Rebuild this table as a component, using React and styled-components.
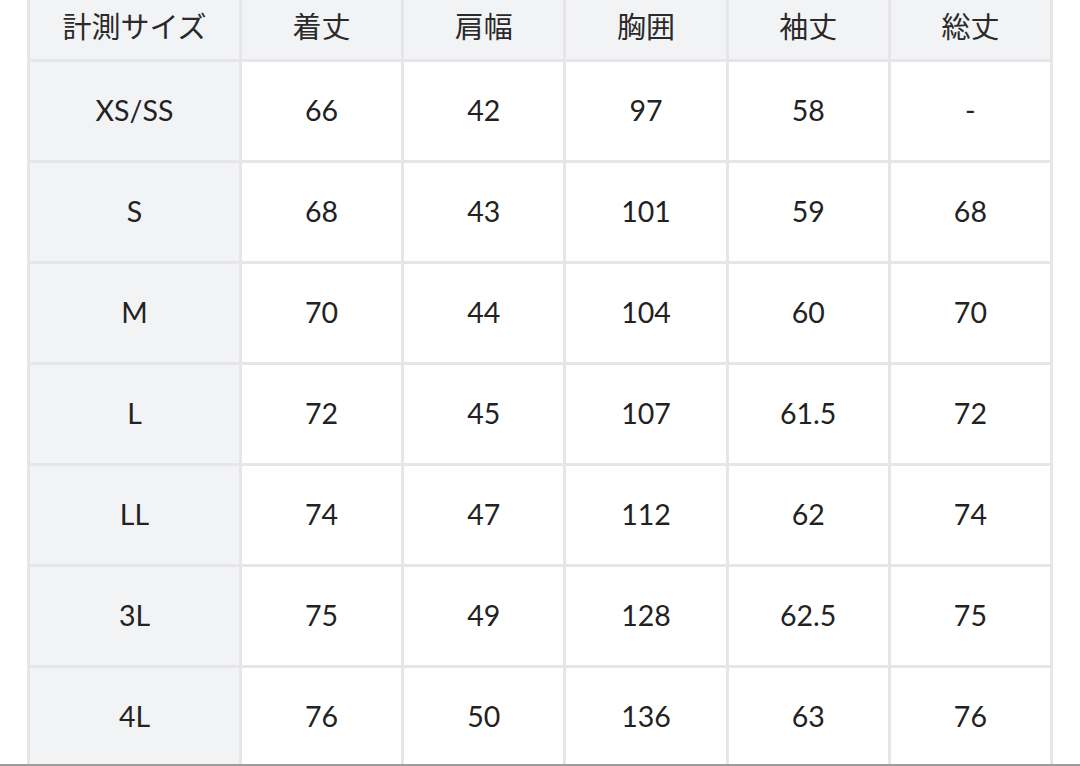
import React from 'react'
import styled, { createGlobalStyle } from 'styled-components'

const GlobalStyle = createGlobalStyle`
  html, body {
    margin: 0;
    padding: 0;
    background: #fff;
  }
  body {
    font-family: Lato, "Noto Sans CJK JP", sans-serif;
    color: #222;
  }
`

const headers = ['計測サイズ', '着丈', '肩幅', '胸囲', '袖丈', '総丈']

const rows = [
  ['XS/SS', '66', '42', '97', '58', '-'],
  ['S', '68', '43', '101', '59', '68'],
  ['M', '70', '44', '104', '60', '70'],
  ['L', '72', '45', '107', '61.5', '72'],
  ['LL', '74', '47', '112', '62', '74'],
  ['3L', '75', '49', '128', '62.5', '75'],
  ['4L', '76', '50', '136', '63', '76'],
]

const Page = () => {
  return (
    <Wrapper>
      <GlobalStyle />
      <Table>
        {headers.map((h) => (
          <HeadCell key={h}>{h}</HeadCell>
        ))}
        {rows.map((row) =>
          row.map((val, i) => (
            <Cell key={row[0] + i} $label={i === 0}>
              {val}
            </Cell>
          ))
        )}
      </Table>
    </Wrapper>
  )
}

const Wrapper = styled.main`
  height: 766px;
  box-sizing: border-box;
  overflow: hidden;
  padding-left: 27px;
  border-bottom: 2px solid #9c9c9c;
`

const Table = styled.div`
  width: 1026px;
  display: grid;
  grid-template-columns: 209px repeat(5, 1fr);
  grid-template-rows: 59px;
  grid-auto-rows: 98px;
  gap: 3px;
  padding: 0 3px 3px;
  box-sizing: border-box;
  background: #e6e6e8;
`

const HeadCell = styled.div`
  box-sizing: border-box;
  padding-bottom: 9px;
  display: flex;
  align-items: center;
  justify-content: center;
  background: #f2f3f5;
  font-size: 29px;
  font-weight: 400;
  color: #2a2a2a;
  font-family: "Noto Sans CJK JP", sans-serif;
`

const Cell = styled.div`
  box-sizing: border-box;
  padding-bottom: 3px;
  display: flex;
  align-items: center;
  justify-content: center;
  background: ${(p) => (p.$label ? '#f2f3f5' : '#fff')};
  font-size: 28.5px;
  font-weight: 400;
  color: #222;
`

export default function App() {
  return <Page />
}
